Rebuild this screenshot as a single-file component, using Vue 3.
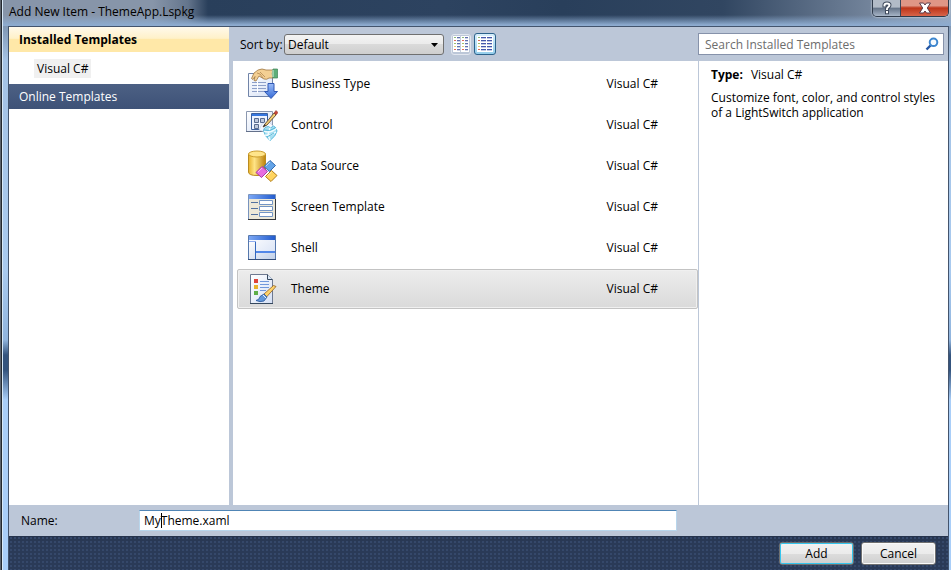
<script setup>
import { ref } from 'vue'

const items = [
  { id: 'business', label: 'Business Type' },
  { id: 'control', label: 'Control' },
  { id: 'data', label: 'Data Source' },
  { id: 'screen', label: 'Screen Template' },
  { id: 'shell', label: 'Shell' },
  { id: 'theme', label: 'Theme' }
]
const selected = ref('theme')
const sort = ref('Default')
const name = ref('MyTheme.xaml')
const tints = ['#8dbb78', '#dd6a5c', '#9cc06c', '#ddd07a', '#dd6a5c']
</script>

<template>
  <div class="window">
    <header class="titlebar">
      <h1>Add New Item - ThemeApp.Lspkg</h1>
      <div class="caption-buttons">
        <button class="help" aria-label="Help">
          <svg width="12" height="14" viewBox="0 0 12 14"><g fill="none" stroke-linecap="square"><path d="M3.500 4.500V4q0-1.500 2.500-1.500T8.500 4q0 1.200-1.200 2T6 8M6 11v.2" stroke="#3f4a5c" stroke-width="4" /><path d="M3.500 4.500V4q0-1.500 2.500-1.500T8.500 4q0 1.200-1.200 2T6 8M6 11v.2" stroke="#fff" stroke-width="2" /></g></svg>
        </button>
        <button class="close" aria-label="Close">
          <svg width="14" height="12" viewBox="0 0 14 12"><path d="M1.500 1h4L7 3l1.500-2h4L9.300 6l3.200 5h-4L7 9l-1.500 2h-4l3.200-5z" fill="#fff" stroke="#5a3a48" /></svg>
        </button>
      </div>
    </header>

    <main class="client">
      <div class="body">
        <nav class="sidebar">
          <div class="group open">Installed Templates</div>
          <div class="children"><a href="#csharp">Visual C#</a></div>
          <div class="group online">Online Templates</div>
        </nav>

        <section class="content">
          <div class="toolbar">
            <label for="sort">Sort by:</label>
            <div class="select-wrap">
              <select id="sort" v-model="sort"><option>Default</option></select>
              <svg class="arrow" width="7" height="4" viewBox="0 0 7 4"><path d="M0 0h7L3.500 4z" fill="#000" /></svg>
            </div>
            <button class="view" aria-label="Small icons">
              <svg width="16" height="16" viewBox="0 0 16 16" shape-rendering="crispEdges">
                <path d="M0 0h16v16H0z" fill="#fff" />
                <g v-for="(t, i) in tints" :key="i">
                  <path :d="`M1 ${i * 3 + 1}h2v1h-2zM9 ${i * 3 + 1}h2v1h-2z`" :fill="t" />
                  <path :d="`M4 ${i * 3 + 1}h3v1h-3zM12 ${i * 3 + 1}h3v1h-3z`" fill="#5f70b0" />
                  <path :d="`M4 ${i * 3 + 2}h3v1h-3zM12 ${i * 3 + 2}h3v1h-3z`" fill="#cdd3e6" />
                </g>
                <path d="M7 0h1v16H7z" fill="#c5cedd" />
              </svg>
            </button>
            <button class="view active" aria-label="Medium icons">
              <svg width="16" height="16" viewBox="0 0 16 16" shape-rendering="crispEdges">
                <path d="M0 0h16v16H0z" fill="#fff" />
                <g v-for="(t, i) in tints" :key="i">
                  <path :d="`M1 ${i * 3 + 1}h2v1h-2z`" :fill="t" />
                  <path :d="`M4 ${i * 3 + 1}h5v1h-5zM10 ${i * 3 + 1}h5v1h-5z`" fill="#4458ac" />
                  <path :d="`M4 ${i * 3 + 2}h5v1h-5zM10 ${i * 3 + 2}h5v1h-5z`" fill="#c3cae4" />
                </g>
              </svg>
            </button>
            <form class="search" @submit.prevent>
              <input aria-label="Search Installed Templates" placeholder="Search Installed Templates" />
              <button aria-label="Search"><svg width="14" height="14" viewBox="0 0 14 14" fill="none"><path d="M5.500 8.500L1.500 12.500" stroke="#2456a4" stroke-width="2.400" /><circle cx="8.500" cy="5.300" r="3.800" stroke="#3d86cf" stroke-width="2" fill="#f5faff" /></svg></button>
            </form>
          </div>

          <div class="panes">
            <ul class="items">
              <li v-for="item in items" :key="item.id">
                <button :class="{ selected: selected === item.id }" @click="selected = item.id">
                  <svg class="icon" width="32" height="32" viewBox="0 0 32 32">
                    <g v-if="item.id === 'business'">
                      <path d="M2.500 5.500h24v23h-24z" fill="url(#paper)" stroke="#7184a8" />
                      <path d="M6 14.500h14M6 17.500h14M6 20.500h14M6 23.500h14" stroke="#8d9fc9" /><path d="M11.500 13v12" stroke="#fff" />
                      <path d="M12 2q4-2 8 0h7v8h-4q-2 2-5 1l-5-3-3 5-2-.5 1-4-2 3-1.500-1L8 5z" fill="#f3cf93" stroke="#9e7744" stroke-width=".8" />
                      <path d="M11 5l3 1 3 4M14 4l5 5" fill="none" stroke="#a87c49" stroke-width=".7" />
                      <path d="M27 1h4.500v9H27q-1.500-4 0-9z" fill="#5fae78" stroke="#3f8458" stroke-width=".7" /><path d="M27 2v7" stroke="#d8f2dd" />
                      <path d="M22 15.500h6v8h3.500L25 30.500l-6.500-7H22z" fill="url(#arrow)" stroke="#3159b5" />
                    </g>
                    <g v-else-if="item.id === 'control'">
                      <path d="M.5 2.500h26v20H.5z" fill="url(#paper)" stroke="#8b98b0" /><path d="M0 22.500h26" stroke="#63708a" />
                      <path d="M5.500 4.500h16v16h-16z" fill="#edf3ff" stroke="#3b5f9d" /><path d="M6 5h15v2H6z" fill="#3777df" />
                      <path d="M8.500 9.500h4v4h-4zM14.500 9.500h4v4h-4zM8.500 15.500h4v4h-4z" fill="#bdc8dd" stroke="#596b8e" />
                      <path d="M13 21l3-6 6-3 5 5-5 7z" fill="#f4f8ff" stroke="#bac8df" stroke-width=".5" />
                      <path d="M19 15L28 4l2 2-9 10-4 2z" fill="#f3cf72" stroke="#5f4a35" stroke-width=".9" /><path d="M28 4l2-2.500 2 2L30 6z" fill="#c84537" stroke="#8d3730" stroke-width=".6" /><path d="M17 18l1.500-3 1.500 1.500z" fill="#333" />
                      <path d="M17.500 22q0-4 5-4.500l2 1.500 3-2q3 1 3.500 5-1 5-7 9.500-5-4-6.500-9.500z" fill="#a8e0f2" stroke="#5bbbdc" /><path d="M18 22q6 3 13-3M19 26q6 1 11-3M24 19l-2 7 2 5" fill="none" stroke="#f2fcff" stroke-width="1.500" /><path d="M18 21q6 2 11-2M21 28l7-4" fill="none" stroke="#36a7cf" stroke-width=".8" />
                    </g>
                    <g v-else-if="item.id === 'data'">
                      <path d="M2.500 4v18q0 3.500 8.500 3.500t8.500-3.500V4z" fill="url(#gold)" stroke="#ba8b20" /><ellipse cx="11" cy="4" rx="8.500" ry="3" fill="#ffe58b" stroke="#cc9d2c" />
                      <path d="M24 10.500l5.500 5-6 6-5.500-5z" fill="#64a4e8" stroke="#326bb0" /><path d="M16 16.500l5.500 5-6 6-5.500-5z" fill="#e66fe0" stroke="#a838a5" /><path d="M25.500 20.500l5.500 5-6 6-5.500-5z" fill="#ffd45e" stroke="#b17d18" /><path d="M20 16l4-4M12 22l4-4M21.500 25.500l4-3.500" stroke="#fff" opacity=".6" />
                    </g>
                    <g v-else-if="item.id === 'screen'">
                      <path d="M2.500 3.500h27v25h-27z" fill="#ece8d8" stroke="#7893be" /><path d="M3 4h26v4H3z" fill="url(#bar)" /><path d="M2 28.500h28M29.500 8v21" stroke="#34383e" />
                      <path d="M5 11.500h7M5 17.500h7M5 23.500h7" stroke="#52719f" /><path d="M13.500 9.500h13v4h-13zM13.500 15.500h13v4h-13zM13.500 21.500h13v4h-13z" fill="#fff" stroke="#7395c5" />
                    </g>
                    <g v-else-if="item.id === 'shell'">
                      <path d="M2.500 3.500h27v24h-27z" fill="url(#paper)" stroke="#5678ad" /><path d="M3 4h26v4H3z" fill="url(#bar)" /><path d="M3 9h7v18H3zM10 21h19v6H10z" fill="url(#shade)" /><path d="M9.500 9v18" stroke="#3366bb" /><path d="M10 20h19" stroke="#5187e8" stroke-width="2" /><path d="M3 9.500h7" stroke="#8eacee" /><path d="M2 27.500h28" stroke="#344e79" />
                    </g>
                    <g v-else>
                      <path d="M4.500 1.500h17l5 5v24h-22z" fill="url(#paper)" stroke="#6d7890" /><path d="M21.500 1.500v5h5" fill="#dbe7f7" stroke="#35485e" /><path d="M4 30.500h23" stroke="#35485e" />
                      <path d="M8 6h4v4H8z" fill="#df4439" /><path d="M8 12h4v4H8z" fill="#e9b32b" /><path d="M8 18h4v4H8z" fill="#5dae49" /><path d="M14 8.500h9M14 11.500h9M14 14.500h9M14 17.500h6" stroke="#7198db" />
                      <path d="M18 21l9.500-8.500 2.500 1L20.500 24z" fill="#ffd36a" stroke="#906021" stroke-width=".8" /><path d="M18 21l3 3-3 4q-4 1.500-8-.5 4-1 4-4z" fill="#6298db" stroke="#26569c" stroke-width=".8" /><path d="M17 22l3 3" stroke="#eef4ff" />
                    </g>
                  </svg>
                  <span class="label">{{ item.label }}</span>
                  <span class="lang">Visual C#</span>
                </button>
              </li>
            </ul>
            <aside class="details">
              <p><b>Type:</b><span>Visual C#</span></p>
              <p>Customize font, color, and control styles of a LightSwitch application</p>
            </aside>
          </div>
        </section>
      </div>

      <div class="name-row">
        <label for="name">Name:</label>
        <div class="field"><input id="name" v-model="name" /><i class="caret"></i></div>
      </div>
      <footer>
        <button class="action primary">Add</button>
        <button class="action">Cancel</button>
      </footer>
    </main>
    <svg class="defs" width="0" height="0" aria-hidden="true">
      <defs>
        <linearGradient id="paper" x2="1" y2="1"><stop stop-color="#fff" /><stop offset="1" stop-color="#d5e0f5" /></linearGradient>
        <linearGradient id="arrow" x2="0" y2="1"><stop stop-color="#9bbcf8" /><stop offset="1" stop-color="#356bd7" /></linearGradient>
        <linearGradient id="gold"><stop stop-color="#e8b32d" /><stop offset=".35" stop-color="#ffe486" /><stop offset="1" stop-color="#bd820c" /></linearGradient>
        <linearGradient id="bar"><stop stop-color="#7ba7f4" /><stop offset="1" stop-color="#235cce" /></linearGradient>
        <linearGradient id="shade" x2="1" y2="1"><stop stop-color="#fff" /><stop offset="1" stop-color="#c1d0e9" /></linearGradient>
      </defs>
    </svg>
  </div>
</template>

<style>
html, body, #app { height: 100%; }
body { margin: 0; background: #fff; }
</style>

<style scoped>
* { box-sizing: border-box; }
.window {
  display: flex;
  flex-direction: column;
  height: calc(100% - 3px);
  padding: 0 2px 0 8px;
  font: 12px/15px "Segoe UI", "Open Sans", sans-serif;
  color: #000;
  background: linear-gradient(90deg, #5c636c 0 1px, #23282e 1px 2px, #d8e9f8 2px 3px, transparent 3px), linear-gradient(#64768e, #a4c2e4 60px, #a9caef 270px, #90b4dd 340px, #34547e 355px 370px, #a9cef8 400px);
}
button, input, select { font: inherit; color: inherit; }
button { padding: 0; }
.titlebar {
  display: flex;
  justify-content: space-between;
  height: 26px;
  margin: 0 -2px 0 -5px;
  padding: 0 2px 0 6px;
  background: linear-gradient(transparent 15px, #8dabcf 25px), linear-gradient(90deg, #8795a9, #8795a9 150px, #64758c 185px, #293f5b 205px, #2d4360 440px, #293f5b 560px, #314661 720px, #74859c 870px, #9aabc0);
}
h1 { margin: 0; padding-top: 4px; font-size: 12px; line-height: 15px; font-weight: 400; }
.caption-buttons { display: flex; height: 17px; border: 1px solid #2f3b4b; border-top: 0; border-radius: 0 0 5px 5px; overflow: hidden; box-shadow: 0 0 2px #fff; }
.caption-buttons button { display: flex; justify-content: center; align-items: center; border: 0; }
.caption-buttons .help { width: 28px; background: linear-gradient(#b2bbc7 45%, #637286 50%, #a7b5c7); border-right: 1px solid #38465a; }
.close { width: 47px; background: linear-gradient(#df9686 35%, #bd3519 50%, #d8644a); }
.client { flex: 1; min-height: 0; display: flex; flex-direction: column; border: 1px solid #43546d; border-bottom: 0; background: #bcc7d8; }
.body { flex: 1; min-height: 0; display: flex; gap: 4px; }
.sidebar { width: 220px; background: #fff; }
.group { height: 25px; padding: 5px 10px; color: #fff; background: linear-gradient(#4c6084, #3e5277); }
.group.open { color: #000; font-weight: 700; background: linear-gradient(#fff9eb, #fff1c9 45%, #ffe8a8 50%); }
.children { height: 32px; padding: 7px 25px; }
.children a { display: inline-block; height: 19px; padding: 2px 3px; color: #000; text-decoration: none; background: #f0f0f0; }
.content { flex: 1; min-width: 0; display: flex; flex-direction: column; }
.toolbar { display: flex; align-items: center; height: 34px; padding: 0 4px 0 7px; }
.toolbar label { width: 44px; white-space: nowrap; }
.select-wrap { position: relative; width: 160px; height: 21px; margin-right: 7px; }
select { display: block; width: 100%; height: 21px; padding: 0 3px; appearance: none; border: 1px solid #707070; border-radius: 3px; background: linear-gradient(#f3f3f3, #ebebeb 50%, #dadada 50%, #cfcfcf); }
.arrow { position: absolute; right: 6px; top: 9px; pointer-events: none; }
.view { display: flex; align-items: center; justify-content: center; width: 20px; height: 21px; margin-right: 3px; border: 1px solid #e1e6ef; border-radius: 3px; background: transparent; }
.view.active { width: 22px; height: 22px; border: 1px solid #2c628b; background: linear-gradient(#d8effc, #94ceec); }
.search { display: flex; align-items: center; width: 246px; height: 22px; margin-left: auto; border: 1px solid #8692aa; background: #fff; }
.search input { flex: 1; min-width: 0; padding: 0 6px; border: 0; background: none; outline: 0; }
.search input::placeholder { color: #6d6d6d; opacity: 1; }
.search button { display: flex; margin-right: 4px; border: 0; background: none; }
.panes { flex: 1; display: flex; min-height: 0; background: #fff; }
.items { flex: 1; margin: 0; padding: 3px 0 0 4px; list-style: none; }
.items li { height: 41px; }
.items button { display: flex; align-items: center; width: 100%; height: 40px; padding: 0 39px 0 8px; border: 1px solid transparent; border-radius: 2px; background: none; text-align: left; }
.items .selected { border-color: #c3c3c3; background: linear-gradient(#ededed, #dadada); box-shadow: inset 0 0 0 1px #f0f0f0; }
.label { flex: 1; margin-left: 13px; }
.label, .lang { padding-bottom: 2px; }
.details { width: 250px; padding: 6px 12px; border-left: 1px solid #bcc7d8; }
.details p { margin: 0 0 8px; }
.details b { margin-right: 8px; }
.name-row { display: flex; align-items: center; height: 31px; padding-left: 12px; }
.name-row label { width: 118px; }
.field { position: relative; width: 58%; }
.field input { display: block; width: 100%; height: 21px; padding: 0 4px; border: 1px solid #b8d6ec; border-top-color: #5085b5; background: #fff; outline: 0; }
.caret { position: absolute; left: 22px; top: 3px; width: 1px; height: 15px; background: #000; }
footer { display: flex; justify-content: flex-end; gap: 7px; height: 34px; padding: 6px 12px 0 0; background: radial-gradient(circle, #35486a 0 1px, transparent 1px) 0 0 / 4px 4px, linear-gradient(#24324b, #2a3a57 6px); }
.action { width: 75px; height: 23px; border: 1px solid #707070; border-radius: 3px; box-shadow: inset 0 0 0 1px #fafafa; background: linear-gradient(#f2f2f2, #ebebeb 50%, #dddddd 50%, #cfcfcf); }
.primary { box-shadow: inset 0 0 0 1px #35c5ee; }
.defs { position: absolute; }
</style>
